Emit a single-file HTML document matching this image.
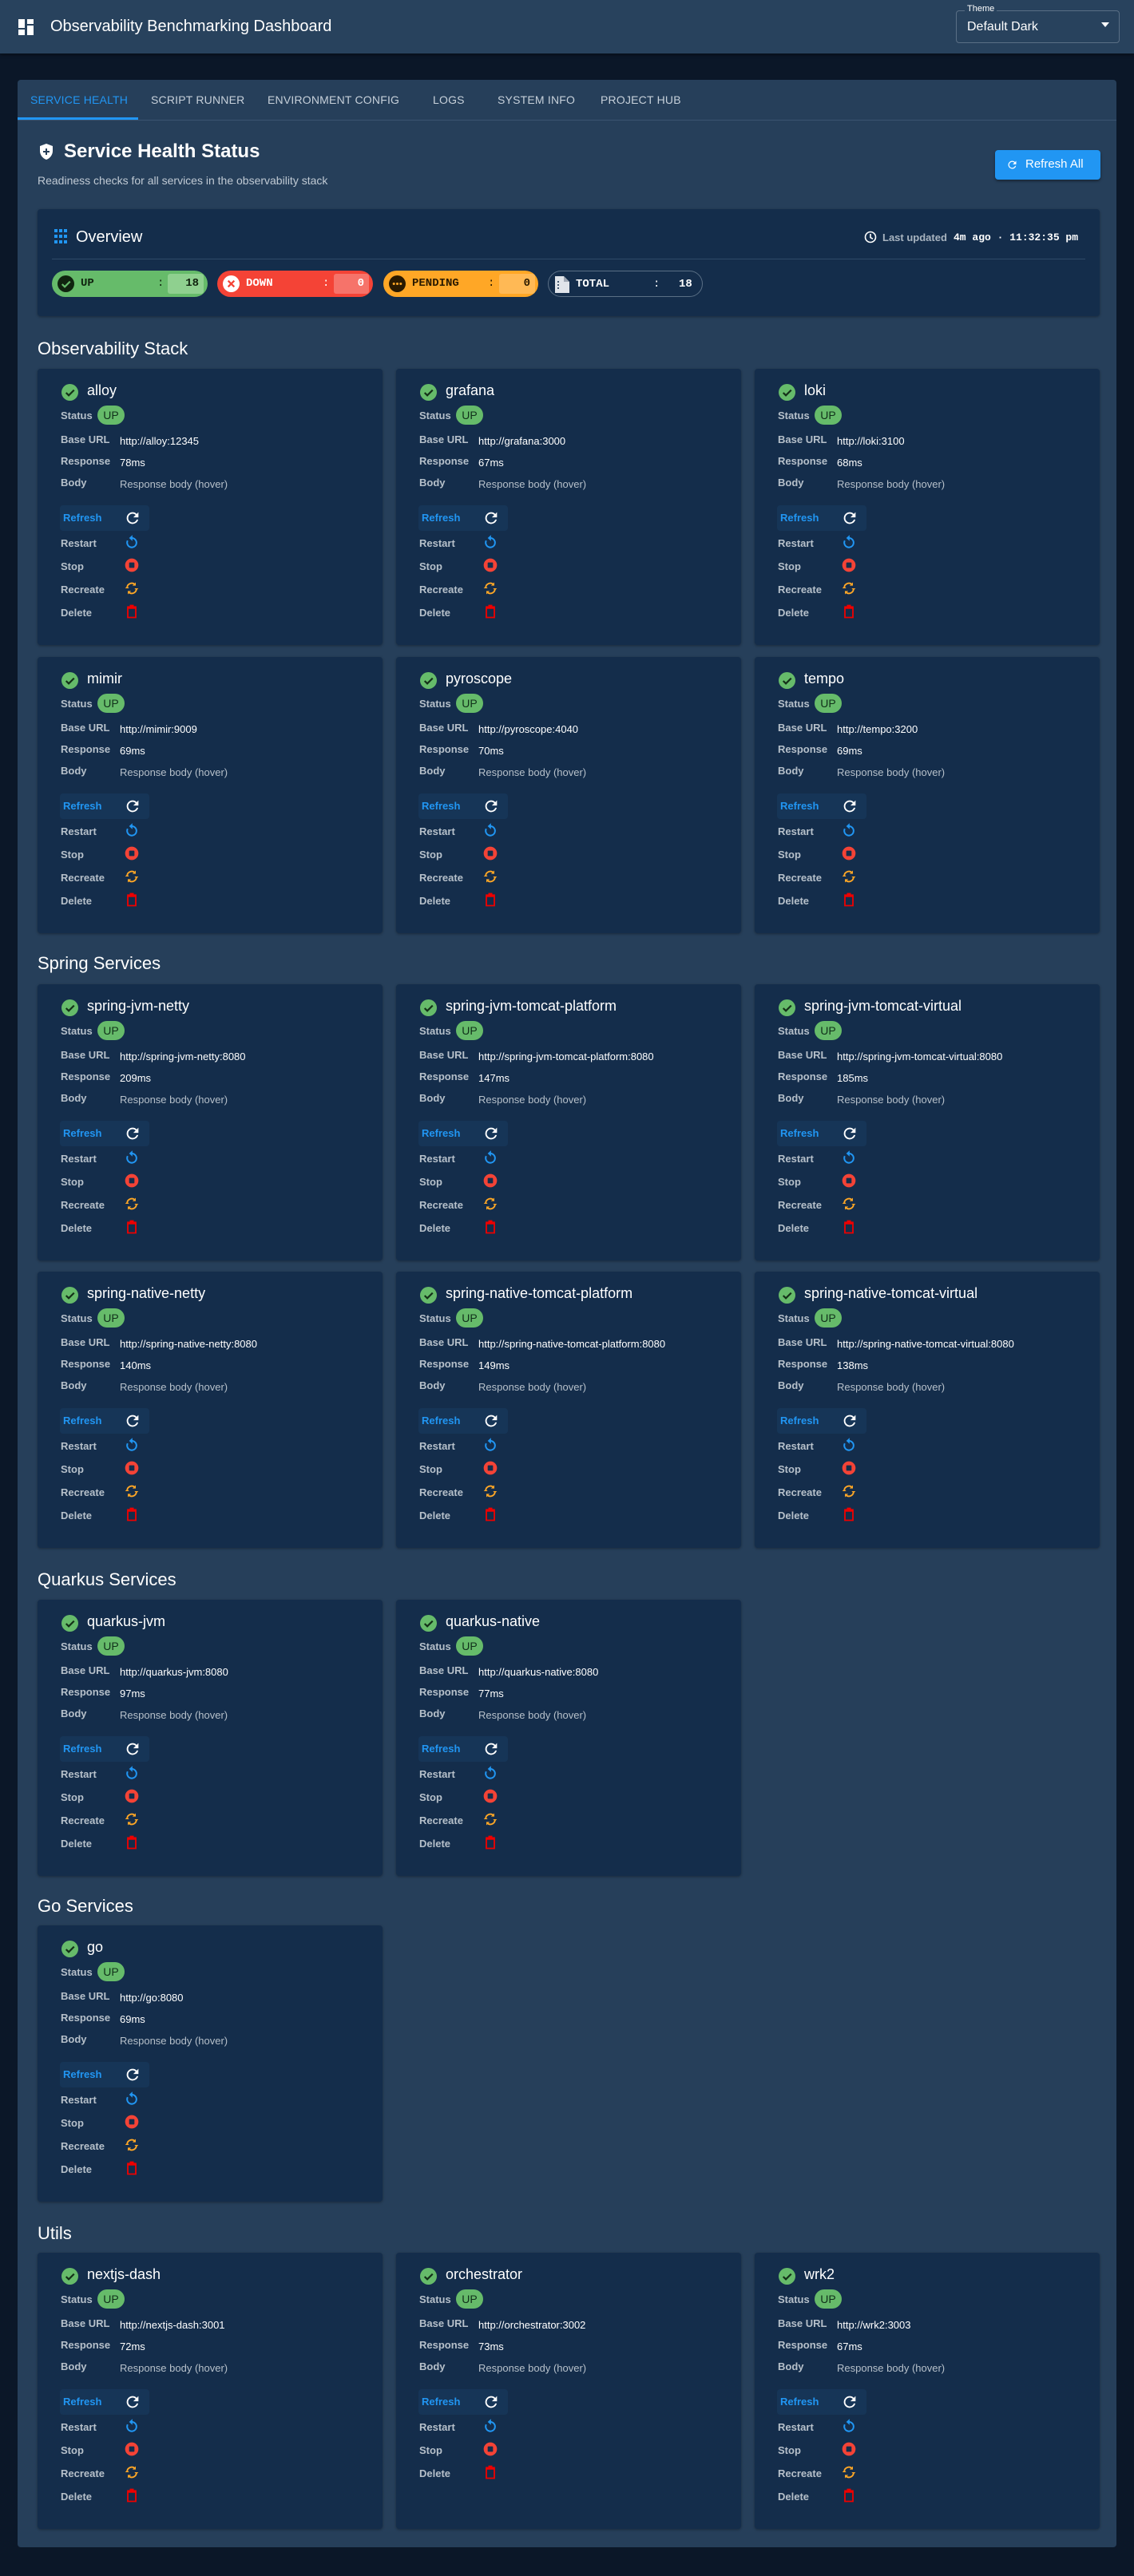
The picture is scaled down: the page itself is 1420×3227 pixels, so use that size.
<!DOCTYPE html>
<html><head><meta charset="utf-8"><style>
*{box-sizing:border-box;margin:0;padding:0}
body{width:1420px;height:3227px;background:#0b1728;font-family:"Liberation Sans",sans-serif;color:#fff;position:relative;overflow:hidden}
.hdr{position:absolute;left:0;top:0;width:1420px;height:67px;background:#28425d;box-shadow:0 2px 4px rgba(0,0,0,.4)}
.hdr .t{position:absolute;left:63px;top:22px;font-size:20px}
.sel{position:absolute;left:1197px;top:13px;width:205px;height:41px;border:1px solid #5a6f85;border-radius:4px}
.sel .lb{position:absolute;left:10px;top:-9px;font-size:11px;background:#28425d;padding:0 3px}
.sel .v{position:absolute;left:13px;top:11px;font-size:16px}
.sel .a{position:absolute;right:12px;top:14px;width:0;height:0;border-left:5px solid transparent;border-right:5px solid transparent;border-top:6px solid #fff}
.panel{position:absolute;left:22px;top:100px;width:1376px;height:3091px;background:#263f5a;border-radius:4px}
.tabs{position:absolute;left:0;top:0;width:1376px;height:51px;border-bottom:1px solid #3a5470}
.tab{position:absolute;top:17px;font-size:14px;color:#c6d0da;letter-spacing:.2px}
.ul{position:absolute;left:0;top:47px;width:151px;height:3px;background:#2196f3}
.abs{position:absolute}
.h1{left:58px;top:76px;font-size:24px;font-weight:bold}
.sub{left:25px;top:118px;font-size:14px;color:#c0cad4}
.rbtn{left:1224px;top:88px;width:132px;height:37px;background:#2196f3;border-radius:4px;font-size:15px;box-shadow:0 2px 3px rgba(0,0,0,.4)}
.card{position:absolute;background:#142d4b;border-radius:4px;box-shadow:0 1px 3px rgba(0,0,0,.35)}
.ov{left:25px;top:162px;width:1330px;height:134px}
.chip{position:absolute;top:77px;height:33px;border-radius:17px;font-family:"Liberation Mono",monospace;font-weight:bold;font-size:14px}
.sec{position:absolute;left:25px;font-size:22px}
.svc{width:432px;height:346px}
.svc .ic{position:absolute;left:30px;top:19px}
.svc .nm{position:absolute;left:62px;top:17px;font-size:18px}
.svc .l{position:absolute;left:29px;font-size:13px;font-weight:bold;color:#b6c0ca}
.svc .v{position:absolute;left:103px;font-size:13px}
.svc .chipup{position:absolute;left:75px;top:46px;width:34px;height:24px;border-radius:12px;background:#66bb6a;color:#10301a;font-size:14px;text-align:center;line-height:24px}
.svc .rb{position:absolute;left:28px;top:171px;width:112px;height:32px;background:#163557;border-radius:4px}
.svc .rb span{position:absolute;left:4px;top:8px;color:#2196f3;font-weight:bold;font-size:13px}
.svc .ai{position:absolute;left:108px}
</style></head><body>
<div class="hdr">
<svg class="abs" style="left:23px;top:24px" width="20" height="20" viewBox="0 0 20 20"><rect x="0" y="0" width="8" height="11" fill="#fff"/><rect x="11" y="0" width="8" height="6" fill="#fff"/><rect x="0" y="13" width="8" height="7" fill="#fff"/><rect x="11" y="8" width="8" height="12" fill="#fff"/></svg>
<div class="t">Observability Benchmarking Dashboard</div>
<div class="sel"><span class="lb">Theme</span><span class="v">Default Dark</span><span class="a"></span></div>
</div>
<div class="panel">
<div class="tabs">
<span class="tab" style="left:16px;color:#2196f3">SERVICE HEALTH</span>
<span class="tab" style="left:167px">SCRIPT RUNNER</span>
<span class="tab" style="left:313px">ENVIRONMENT CONFIG</span>
<span class="tab" style="left:520px">LOGS</span>
<span class="tab" style="left:601px">SYSTEM INFO</span>
<span class="tab" style="left:730px">PROJECT HUB</span>
<div class="ul"></div>
</div>
<svg class="abs" style="left:28px;top:80px" width="16" height="20" viewBox="0 0 16 20"><path d="M8 0L0 3v6c0 5 3.5 9.5 8 11 4.5-1.5 8-6 8-11V3z" fill="#fff"/><path d="M7 6h2v3h3v2H9v3H7v-3H4V9h3z" fill="#263f5a"/></svg>
<div class="abs h1">Service Health Status</div>
<div class="abs sub">Readiness checks for all services in the observability stack</div>
<div class="abs rbtn"><svg class="abs" style="left:14px;top:11px" width="15" height="15" viewBox="0 0 24 24"><path d="M17.65 6.35A7.96 7.96 0 0 0 12 4a8 8 0 1 0 7.73 10h-2.08A6 6 0 1 1 12 6c1.66 0 3.14.69 4.22 1.78L13 11h7V4z" fill="#fff"/></svg><span class="abs" style="left:38px;top:9px">Refresh All</span></div>
<div class="card ov">
<svg class="abs" style="left:21px;top:25px" width="16" height="18" viewBox="0 0 16 18" fill="#2196f3"><rect x="0" y="0" width="4" height="4"/><rect x="6" y="0" width="4" height="4"/><rect x="12" y="0" width="4" height="4"/><rect x="0" y="7" width="4" height="4"/><rect x="6" y="7" width="4" height="4"/><rect x="12" y="7" width="4" height="4"/><rect x="0" y="14" width="4" height="4"/><rect x="6" y="14" width="4" height="4"/><rect x="12" y="14" width="4" height="4"/></svg>
<span class="abs" style="left:48px;top:24px;font-size:20px">Overview</span>
<svg class="abs" style="left:1035px;top:27px" width="16" height="16" viewBox="0 0 16 16"><circle cx="8" cy="8" r="6.5" fill="none" stroke="#fff" stroke-width="1.6"/><path d="M8 4v4.5l3 1.8" fill="none" stroke="#fff" stroke-width="1.6"/></svg>
<span class="abs" style="left:1058px;top:28px;font-size:13px;font-weight:bold;color:#a8b4c0">Last updated</span>
<span class="abs" style="left:1147px;top:28px;font-size:13px;font-weight:bold;font-family:'Liberation Mono',monospace">4m ago · 11:32:35 pm</span>
<div class="abs" style="left:18px;top:62px;width:1294px;height:1px;background:#2e4a68"></div>
<div class="chip" style="left:18px;width:195px;background:#66bb6a;color:#10240f"><svg class="abs" style="left:7px;top:6px" width="21" height="21" viewBox="0 0 22 22"><circle cx="11" cy="11" r="11" fill="#10240f"/><path d="M6 11.5l3.5 3.5 7-7" fill="none" stroke="#66bb6a" stroke-width="2.3"/></svg><span class="abs" style="left:36px;top:8px">UP</span><span class="abs" style="left:132px;top:8px;font-weight:normal">:</span><div class="abs" style="left:145px;top:4px;width:45px;height:25px;background:#8fd08f;border-radius:3px;text-align:right;padding:4px 6px 0 0">18</div></div>
<div class="chip" style="left:225px;width:195px;background:#f44336"><svg class="abs" style="left:7px;top:6px" width="21" height="21" viewBox="0 0 22 22"><circle cx="11" cy="11" r="11" fill="#fff"/><path d="M7 7l8 8M15 7l-8 8" stroke="#f44336" stroke-width="2.3"/></svg><span class="abs" style="left:36px;top:8px">DOWN</span><span class="abs" style="left:132px;top:8px;font-weight:normal">:</span><div class="abs" style="left:146px;top:4px;width:44px;height:25px;background:#f6736a;border-radius:3px;text-align:right;padding:4px 6px 0 0">0</div></div>
<div class="chip" style="left:433px;width:194px;background:#ffa726;color:#2a1a00"><svg class="abs" style="left:7px;top:6px" width="21" height="21" viewBox="0 0 22 22"><circle cx="11" cy="11" r="11" fill="#2a1a00"/><circle cx="6.5" cy="11" r="1.6" fill="#ffa726"/><circle cx="11" cy="11" r="1.6" fill="#ffa726"/><circle cx="15.5" cy="11" r="1.6" fill="#ffa726"/></svg><span class="abs" style="left:36px;top:8px">PENDING</span><span class="abs" style="left:131px;top:8px;font-weight:normal">:</span><div class="abs" style="left:145px;top:4px;width:45px;height:25px;background:#ffb955;border-radius:3px;text-align:right;padding:4px 6px 0 0">0</div></div>
<div class="chip" style="left:639px;width:194px;border:1px solid #5a6f85"><svg class="abs" style="left:8px;top:6px" width="18" height="21" viewBox="0 0 18 21"><path d="M0 0h11l7 7v14H0z" fill="#e0e4ea"/><path d="M11 0v7h7" fill="#a0a8b4"/><circle cx="4" cy="7" r="1" fill="#142d4b"/><circle cx="4" cy="11" r="1" fill="#142d4b"/><circle cx="4" cy="15" r="1" fill="#142d4b"/></svg><span class="abs" style="left:34px;top:8px">TOTAL</span><span class="abs" style="left:131px;top:8px;font-weight:normal">:</span><span class="abs" style="left:163px;top:8px">18</span></div>
</div>
</div>

<svg width="0" height="0" style="position:absolute"><defs>
<symbol id="ok" viewBox="0 0 22 22"><circle cx="11" cy="11" r="11" fill="#66bb6a"/><path d="M6 11.5l3.5 3.5 7-7" fill="none" stroke="#143018" stroke-width="2.3"/></symbol>
<symbol id="rf" viewBox="0 0 24 24"><path d="M17.65 6.35A7.96 7.96 0 0 0 12 4a8 8 0 1 0 7.73 10h-2.08A6 6 0 1 1 12 6c1.66 0 3.14.69 4.22 1.78L13 11h7V4z" fill="#fff"/></symbol>
<symbol id="rs" viewBox="0 0 24 24"><path d="M12 6a7 7 0 1 1-6.2 3.8" fill="none" stroke="#2196f3" stroke-width="2.4"/><path d="M13 1.5v9L8 6z" fill="#2196f3"/></symbol>
<symbol id="st" viewBox="0 0 24 24"><circle cx="12" cy="12" r="10" fill="#f44336"/><rect x="8" y="8" width="8" height="8" rx="1" fill="#142d4b"/></symbol>
<symbol id="rc" viewBox="0 0 24 24"><path d="M5 11a7 7 0 0 1 12-4.5M19 13a7 7 0 0 1-12 4.5" fill="none" stroke="#ffa726" stroke-width="2.2"/><path d="M18 3v5h-5zM6 21v-5h5z" fill="#ffa726"/><path d="M2 12l3-3 3 3zM22 12l-3 3-3-3z" fill="#ffa726"/></symbol>
<symbol id="dl" viewBox="0 0 24 24"><path d="M6 7h12v14H6z" fill="none" stroke="#e00" stroke-width="2.2"/><path d="M5 4h14v2H5zM9 2h6v2H9z" fill="#e00"/></symbol>
</defs></svg>

<div class="sec" style="left:47px;top:424px">Observability Stack</div>
<div class="sec" style="left:47px;top:1194px">Spring Services</div>
<div class="sec" style="left:47px;top:1966px">Quarkus Services</div>
<div class="sec" style="left:47px;top:2375px">Go Services</div>
<div class="sec" style="left:47px;top:2785px">Utils</div>

<div class="card svc" style="left:47px;top:462px"><svg class="ic" width="21" height="21"><use href="#ok"/></svg><div class="nm">alloy</div><div class="l" style="top:51px">Status</div><div class="chipup">UP</div><div class="l" style="top:81px">Base URL</div><div class="v" style="top:83px">http://alloy:12345</div><div class="l" style="top:108px">Response</div><div class="v" style="top:110px">78ms</div><div class="l" style="top:135px">Body</div><div class="v" style="top:137px;color:#b6c0ca">Response body (hover)</div><div class="rb"><span>Refresh</span></div><svg class="ai" style="top:176px" width="22" height="22"><use href="#rf"/></svg><div class="l" style="top:211px">Restart</div><svg class="ai" style="top:207px" width="20" height="20"><use href="#rs"/></svg><div class="l" style="top:240px">Stop</div><svg class="ai" style="top:236px" width="20" height="20"><use href="#st"/></svg><div class="l" style="top:269px">Recreate</div><svg class="ai" style="top:265px" width="20" height="20"><use href="#rc"/></svg><div class="l" style="top:298px">Delete</div><svg class="ai" style="top:294px" width="20" height="20"><use href="#dl"/></svg></div>

<div class="card svc" style="left:496px;top:462px"><svg class="ic" width="21" height="21"><use href="#ok"/></svg><div class="nm">grafana</div><div class="l" style="top:51px">Status</div><div class="chipup">UP</div><div class="l" style="top:81px">Base URL</div><div class="v" style="top:83px">http://grafana:3000</div><div class="l" style="top:108px">Response</div><div class="v" style="top:110px">67ms</div><div class="l" style="top:135px">Body</div><div class="v" style="top:137px;color:#b6c0ca">Response body (hover)</div><div class="rb"><span>Refresh</span></div><svg class="ai" style="top:176px" width="22" height="22"><use href="#rf"/></svg><div class="l" style="top:211px">Restart</div><svg class="ai" style="top:207px" width="20" height="20"><use href="#rs"/></svg><div class="l" style="top:240px">Stop</div><svg class="ai" style="top:236px" width="20" height="20"><use href="#st"/></svg><div class="l" style="top:269px">Recreate</div><svg class="ai" style="top:265px" width="20" height="20"><use href="#rc"/></svg><div class="l" style="top:298px">Delete</div><svg class="ai" style="top:294px" width="20" height="20"><use href="#dl"/></svg></div>

<div class="card svc" style="left:945px;top:462px"><svg class="ic" width="21" height="21"><use href="#ok"/></svg><div class="nm">loki</div><div class="l" style="top:51px">Status</div><div class="chipup">UP</div><div class="l" style="top:81px">Base URL</div><div class="v" style="top:83px">http://loki:3100</div><div class="l" style="top:108px">Response</div><div class="v" style="top:110px">68ms</div><div class="l" style="top:135px">Body</div><div class="v" style="top:137px;color:#b6c0ca">Response body (hover)</div><div class="rb"><span>Refresh</span></div><svg class="ai" style="top:176px" width="22" height="22"><use href="#rf"/></svg><div class="l" style="top:211px">Restart</div><svg class="ai" style="top:207px" width="20" height="20"><use href="#rs"/></svg><div class="l" style="top:240px">Stop</div><svg class="ai" style="top:236px" width="20" height="20"><use href="#st"/></svg><div class="l" style="top:269px">Recreate</div><svg class="ai" style="top:265px" width="20" height="20"><use href="#rc"/></svg><div class="l" style="top:298px">Delete</div><svg class="ai" style="top:294px" width="20" height="20"><use href="#dl"/></svg></div>

<div class="card svc" style="left:47px;top:823px"><svg class="ic" width="21" height="21"><use href="#ok"/></svg><div class="nm">mimir</div><div class="l" style="top:51px">Status</div><div class="chipup">UP</div><div class="l" style="top:81px">Base URL</div><div class="v" style="top:83px">http://mimir:9009</div><div class="l" style="top:108px">Response</div><div class="v" style="top:110px">69ms</div><div class="l" style="top:135px">Body</div><div class="v" style="top:137px;color:#b6c0ca">Response body (hover)</div><div class="rb"><span>Refresh</span></div><svg class="ai" style="top:176px" width="22" height="22"><use href="#rf"/></svg><div class="l" style="top:211px">Restart</div><svg class="ai" style="top:207px" width="20" height="20"><use href="#rs"/></svg><div class="l" style="top:240px">Stop</div><svg class="ai" style="top:236px" width="20" height="20"><use href="#st"/></svg><div class="l" style="top:269px">Recreate</div><svg class="ai" style="top:265px" width="20" height="20"><use href="#rc"/></svg><div class="l" style="top:298px">Delete</div><svg class="ai" style="top:294px" width="20" height="20"><use href="#dl"/></svg></div>

<div class="card svc" style="left:496px;top:823px"><svg class="ic" width="21" height="21"><use href="#ok"/></svg><div class="nm">pyroscope</div><div class="l" style="top:51px">Status</div><div class="chipup">UP</div><div class="l" style="top:81px">Base URL</div><div class="v" style="top:83px">http://pyroscope:4040</div><div class="l" style="top:108px">Response</div><div class="v" style="top:110px">70ms</div><div class="l" style="top:135px">Body</div><div class="v" style="top:137px;color:#b6c0ca">Response body (hover)</div><div class="rb"><span>Refresh</span></div><svg class="ai" style="top:176px" width="22" height="22"><use href="#rf"/></svg><div class="l" style="top:211px">Restart</div><svg class="ai" style="top:207px" width="20" height="20"><use href="#rs"/></svg><div class="l" style="top:240px">Stop</div><svg class="ai" style="top:236px" width="20" height="20"><use href="#st"/></svg><div class="l" style="top:269px">Recreate</div><svg class="ai" style="top:265px" width="20" height="20"><use href="#rc"/></svg><div class="l" style="top:298px">Delete</div><svg class="ai" style="top:294px" width="20" height="20"><use href="#dl"/></svg></div>

<div class="card svc" style="left:945px;top:823px"><svg class="ic" width="21" height="21"><use href="#ok"/></svg><div class="nm">tempo</div><div class="l" style="top:51px">Status</div><div class="chipup">UP</div><div class="l" style="top:81px">Base URL</div><div class="v" style="top:83px">http://tempo:3200</div><div class="l" style="top:108px">Response</div><div class="v" style="top:110px">69ms</div><div class="l" style="top:135px">Body</div><div class="v" style="top:137px;color:#b6c0ca">Response body (hover)</div><div class="rb"><span>Refresh</span></div><svg class="ai" style="top:176px" width="22" height="22"><use href="#rf"/></svg><div class="l" style="top:211px">Restart</div><svg class="ai" style="top:207px" width="20" height="20"><use href="#rs"/></svg><div class="l" style="top:240px">Stop</div><svg class="ai" style="top:236px" width="20" height="20"><use href="#st"/></svg><div class="l" style="top:269px">Recreate</div><svg class="ai" style="top:265px" width="20" height="20"><use href="#rc"/></svg><div class="l" style="top:298px">Delete</div><svg class="ai" style="top:294px" width="20" height="20"><use href="#dl"/></svg></div>

<div class="card svc" style="left:47px;top:1233px"><svg class="ic" width="21" height="21"><use href="#ok"/></svg><div class="nm">spring-jvm-netty</div><div class="l" style="top:51px">Status</div><div class="chipup">UP</div><div class="l" style="top:81px">Base URL</div><div class="v" style="top:83px">http://spring-jvm-netty:8080</div><div class="l" style="top:108px">Response</div><div class="v" style="top:110px">209ms</div><div class="l" style="top:135px">Body</div><div class="v" style="top:137px;color:#b6c0ca">Response body (hover)</div><div class="rb"><span>Refresh</span></div><svg class="ai" style="top:176px" width="22" height="22"><use href="#rf"/></svg><div class="l" style="top:211px">Restart</div><svg class="ai" style="top:207px" width="20" height="20"><use href="#rs"/></svg><div class="l" style="top:240px">Stop</div><svg class="ai" style="top:236px" width="20" height="20"><use href="#st"/></svg><div class="l" style="top:269px">Recreate</div><svg class="ai" style="top:265px" width="20" height="20"><use href="#rc"/></svg><div class="l" style="top:298px">Delete</div><svg class="ai" style="top:294px" width="20" height="20"><use href="#dl"/></svg></div>

<div class="card svc" style="left:496px;top:1233px"><svg class="ic" width="21" height="21"><use href="#ok"/></svg><div class="nm">spring-jvm-tomcat-platform</div><div class="l" style="top:51px">Status</div><div class="chipup">UP</div><div class="l" style="top:81px">Base URL</div><div class="v" style="top:83px">http://spring-jvm-tomcat-platform:8080</div><div class="l" style="top:108px">Response</div><div class="v" style="top:110px">147ms</div><div class="l" style="top:135px">Body</div><div class="v" style="top:137px;color:#b6c0ca">Response body (hover)</div><div class="rb"><span>Refresh</span></div><svg class="ai" style="top:176px" width="22" height="22"><use href="#rf"/></svg><div class="l" style="top:211px">Restart</div><svg class="ai" style="top:207px" width="20" height="20"><use href="#rs"/></svg><div class="l" style="top:240px">Stop</div><svg class="ai" style="top:236px" width="20" height="20"><use href="#st"/></svg><div class="l" style="top:269px">Recreate</div><svg class="ai" style="top:265px" width="20" height="20"><use href="#rc"/></svg><div class="l" style="top:298px">Delete</div><svg class="ai" style="top:294px" width="20" height="20"><use href="#dl"/></svg></div>

<div class="card svc" style="left:945px;top:1233px"><svg class="ic" width="21" height="21"><use href="#ok"/></svg><div class="nm">spring-jvm-tomcat-virtual</div><div class="l" style="top:51px">Status</div><div class="chipup">UP</div><div class="l" style="top:81px">Base URL</div><div class="v" style="top:83px">http://spring-jvm-tomcat-virtual:8080</div><div class="l" style="top:108px">Response</div><div class="v" style="top:110px">185ms</div><div class="l" style="top:135px">Body</div><div class="v" style="top:137px;color:#b6c0ca">Response body (hover)</div><div class="rb"><span>Refresh</span></div><svg class="ai" style="top:176px" width="22" height="22"><use href="#rf"/></svg><div class="l" style="top:211px">Restart</div><svg class="ai" style="top:207px" width="20" height="20"><use href="#rs"/></svg><div class="l" style="top:240px">Stop</div><svg class="ai" style="top:236px" width="20" height="20"><use href="#st"/></svg><div class="l" style="top:269px">Recreate</div><svg class="ai" style="top:265px" width="20" height="20"><use href="#rc"/></svg><div class="l" style="top:298px">Delete</div><svg class="ai" style="top:294px" width="20" height="20"><use href="#dl"/></svg></div>

<div class="card svc" style="left:47px;top:1593px"><svg class="ic" width="21" height="21"><use href="#ok"/></svg><div class="nm">spring-native-netty</div><div class="l" style="top:51px">Status</div><div class="chipup">UP</div><div class="l" style="top:81px">Base URL</div><div class="v" style="top:83px">http://spring-native-netty:8080</div><div class="l" style="top:108px">Response</div><div class="v" style="top:110px">140ms</div><div class="l" style="top:135px">Body</div><div class="v" style="top:137px;color:#b6c0ca">Response body (hover)</div><div class="rb"><span>Refresh</span></div><svg class="ai" style="top:176px" width="22" height="22"><use href="#rf"/></svg><div class="l" style="top:211px">Restart</div><svg class="ai" style="top:207px" width="20" height="20"><use href="#rs"/></svg><div class="l" style="top:240px">Stop</div><svg class="ai" style="top:236px" width="20" height="20"><use href="#st"/></svg><div class="l" style="top:269px">Recreate</div><svg class="ai" style="top:265px" width="20" height="20"><use href="#rc"/></svg><div class="l" style="top:298px">Delete</div><svg class="ai" style="top:294px" width="20" height="20"><use href="#dl"/></svg></div>

<div class="card svc" style="left:496px;top:1593px"><svg class="ic" width="21" height="21"><use href="#ok"/></svg><div class="nm">spring-native-tomcat-platform</div><div class="l" style="top:51px">Status</div><div class="chipup">UP</div><div class="l" style="top:81px">Base URL</div><div class="v" style="top:83px">http://spring-native-tomcat-platform:8080</div><div class="l" style="top:108px">Response</div><div class="v" style="top:110px">149ms</div><div class="l" style="top:135px">Body</div><div class="v" style="top:137px;color:#b6c0ca">Response body (hover)</div><div class="rb"><span>Refresh</span></div><svg class="ai" style="top:176px" width="22" height="22"><use href="#rf"/></svg><div class="l" style="top:211px">Restart</div><svg class="ai" style="top:207px" width="20" height="20"><use href="#rs"/></svg><div class="l" style="top:240px">Stop</div><svg class="ai" style="top:236px" width="20" height="20"><use href="#st"/></svg><div class="l" style="top:269px">Recreate</div><svg class="ai" style="top:265px" width="20" height="20"><use href="#rc"/></svg><div class="l" style="top:298px">Delete</div><svg class="ai" style="top:294px" width="20" height="20"><use href="#dl"/></svg></div>

<div class="card svc" style="left:945px;top:1593px"><svg class="ic" width="21" height="21"><use href="#ok"/></svg><div class="nm">spring-native-tomcat-virtual</div><div class="l" style="top:51px">Status</div><div class="chipup">UP</div><div class="l" style="top:81px">Base URL</div><div class="v" style="top:83px">http://spring-native-tomcat-virtual:8080</div><div class="l" style="top:108px">Response</div><div class="v" style="top:110px">138ms</div><div class="l" style="top:135px">Body</div><div class="v" style="top:137px;color:#b6c0ca">Response body (hover)</div><div class="rb"><span>Refresh</span></div><svg class="ai" style="top:176px" width="22" height="22"><use href="#rf"/></svg><div class="l" style="top:211px">Restart</div><svg class="ai" style="top:207px" width="20" height="20"><use href="#rs"/></svg><div class="l" style="top:240px">Stop</div><svg class="ai" style="top:236px" width="20" height="20"><use href="#st"/></svg><div class="l" style="top:269px">Recreate</div><svg class="ai" style="top:265px" width="20" height="20"><use href="#rc"/></svg><div class="l" style="top:298px">Delete</div><svg class="ai" style="top:294px" width="20" height="20"><use href="#dl"/></svg></div>

<div class="card svc" style="left:47px;top:2004px"><svg class="ic" width="21" height="21"><use href="#ok"/></svg><div class="nm">quarkus-jvm</div><div class="l" style="top:51px">Status</div><div class="chipup">UP</div><div class="l" style="top:81px">Base URL</div><div class="v" style="top:83px">http://quarkus-jvm:8080</div><div class="l" style="top:108px">Response</div><div class="v" style="top:110px">97ms</div><div class="l" style="top:135px">Body</div><div class="v" style="top:137px;color:#b6c0ca">Response body (hover)</div><div class="rb"><span>Refresh</span></div><svg class="ai" style="top:176px" width="22" height="22"><use href="#rf"/></svg><div class="l" style="top:211px">Restart</div><svg class="ai" style="top:207px" width="20" height="20"><use href="#rs"/></svg><div class="l" style="top:240px">Stop</div><svg class="ai" style="top:236px" width="20" height="20"><use href="#st"/></svg><div class="l" style="top:269px">Recreate</div><svg class="ai" style="top:265px" width="20" height="20"><use href="#rc"/></svg><div class="l" style="top:298px">Delete</div><svg class="ai" style="top:294px" width="20" height="20"><use href="#dl"/></svg></div>

<div class="card svc" style="left:496px;top:2004px"><svg class="ic" width="21" height="21"><use href="#ok"/></svg><div class="nm">quarkus-native</div><div class="l" style="top:51px">Status</div><div class="chipup">UP</div><div class="l" style="top:81px">Base URL</div><div class="v" style="top:83px">http://quarkus-native:8080</div><div class="l" style="top:108px">Response</div><div class="v" style="top:110px">77ms</div><div class="l" style="top:135px">Body</div><div class="v" style="top:137px;color:#b6c0ca">Response body (hover)</div><div class="rb"><span>Refresh</span></div><svg class="ai" style="top:176px" width="22" height="22"><use href="#rf"/></svg><div class="l" style="top:211px">Restart</div><svg class="ai" style="top:207px" width="20" height="20"><use href="#rs"/></svg><div class="l" style="top:240px">Stop</div><svg class="ai" style="top:236px" width="20" height="20"><use href="#st"/></svg><div class="l" style="top:269px">Recreate</div><svg class="ai" style="top:265px" width="20" height="20"><use href="#rc"/></svg><div class="l" style="top:298px">Delete</div><svg class="ai" style="top:294px" width="20" height="20"><use href="#dl"/></svg></div>

<div class="card svc" style="left:47px;top:2412px"><svg class="ic" width="21" height="21"><use href="#ok"/></svg><div class="nm">go</div><div class="l" style="top:51px">Status</div><div class="chipup">UP</div><div class="l" style="top:81px">Base URL</div><div class="v" style="top:83px">http://go:8080</div><div class="l" style="top:108px">Response</div><div class="v" style="top:110px">69ms</div><div class="l" style="top:135px">Body</div><div class="v" style="top:137px;color:#b6c0ca">Response body (hover)</div><div class="rb"><span>Refresh</span></div><svg class="ai" style="top:176px" width="22" height="22"><use href="#rf"/></svg><div class="l" style="top:211px">Restart</div><svg class="ai" style="top:207px" width="20" height="20"><use href="#rs"/></svg><div class="l" style="top:240px">Stop</div><svg class="ai" style="top:236px" width="20" height="20"><use href="#st"/></svg><div class="l" style="top:269px">Recreate</div><svg class="ai" style="top:265px" width="20" height="20"><use href="#rc"/></svg><div class="l" style="top:298px">Delete</div><svg class="ai" style="top:294px" width="20" height="20"><use href="#dl"/></svg></div>

<div class="card svc" style="left:47px;top:2822px"><svg class="ic" width="21" height="21"><use href="#ok"/></svg><div class="nm">nextjs-dash</div><div class="l" style="top:51px">Status</div><div class="chipup">UP</div><div class="l" style="top:81px">Base URL</div><div class="v" style="top:83px">http://nextjs-dash:3001</div><div class="l" style="top:108px">Response</div><div class="v" style="top:110px">72ms</div><div class="l" style="top:135px">Body</div><div class="v" style="top:137px;color:#b6c0ca">Response body (hover)</div><div class="rb"><span>Refresh</span></div><svg class="ai" style="top:176px" width="22" height="22"><use href="#rf"/></svg><div class="l" style="top:211px">Restart</div><svg class="ai" style="top:207px" width="20" height="20"><use href="#rs"/></svg><div class="l" style="top:240px">Stop</div><svg class="ai" style="top:236px" width="20" height="20"><use href="#st"/></svg><div class="l" style="top:269px">Recreate</div><svg class="ai" style="top:265px" width="20" height="20"><use href="#rc"/></svg><div class="l" style="top:298px">Delete</div><svg class="ai" style="top:294px" width="20" height="20"><use href="#dl"/></svg></div>

<div class="card svc" style="left:496px;top:2822px"><svg class="ic" width="21" height="21"><use href="#ok"/></svg><div class="nm">orchestrator</div><div class="l" style="top:51px">Status</div><div class="chipup">UP</div><div class="l" style="top:81px">Base URL</div><div class="v" style="top:83px">http://orchestrator:3002</div><div class="l" style="top:108px">Response</div><div class="v" style="top:110px">73ms</div><div class="l" style="top:135px">Body</div><div class="v" style="top:137px;color:#b6c0ca">Response body (hover)</div><div class="rb"><span>Refresh</span></div><svg class="ai" style="top:176px" width="22" height="22"><use href="#rf"/></svg><div class="l" style="top:211px">Restart</div><svg class="ai" style="top:207px" width="20" height="20"><use href="#rs"/></svg><div class="l" style="top:240px">Stop</div><svg class="ai" style="top:236px" width="20" height="20"><use href="#st"/></svg><div class="l" style="top:269px">Delete</div><svg class="ai" style="top:265px" width="20" height="20"><use href="#dl"/></svg></div>

<div class="card svc" style="left:945px;top:2822px"><svg class="ic" width="21" height="21"><use href="#ok"/></svg><div class="nm">wrk2</div><div class="l" style="top:51px">Status</div><div class="chipup">UP</div><div class="l" style="top:81px">Base URL</div><div class="v" style="top:83px">http://wrk2:3003</div><div class="l" style="top:108px">Response</div><div class="v" style="top:110px">67ms</div><div class="l" style="top:135px">Body</div><div class="v" style="top:137px;color:#b6c0ca">Response body (hover)</div><div class="rb"><span>Refresh</span></div><svg class="ai" style="top:176px" width="22" height="22"><use href="#rf"/></svg><div class="l" style="top:211px">Restart</div><svg class="ai" style="top:207px" width="20" height="20"><use href="#rs"/></svg><div class="l" style="top:240px">Stop</div><svg class="ai" style="top:236px" width="20" height="20"><use href="#st"/></svg><div class="l" style="top:269px">Recreate</div><svg class="ai" style="top:265px" width="20" height="20"><use href="#rc"/></svg><div class="l" style="top:298px">Delete</div><svg class="ai" style="top:294px" width="20" height="20"><use href="#dl"/></svg></div>
</body></html>
